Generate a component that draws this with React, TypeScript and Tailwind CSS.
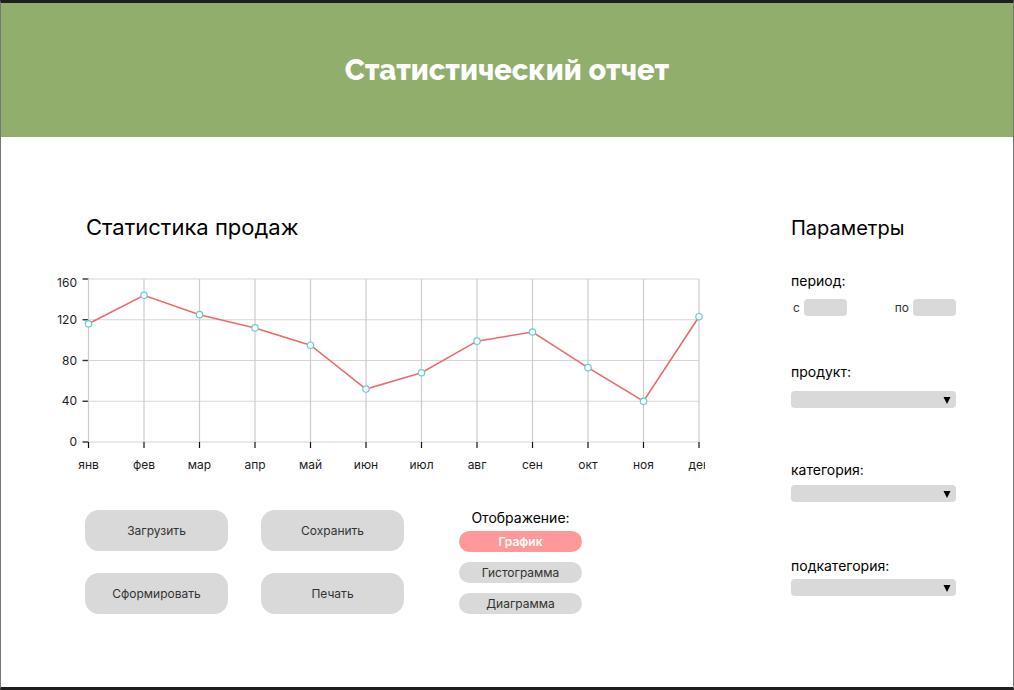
import { useState } from "react";

const sales = [
  { month: "янв", value: 116 },
  { month: "фев", value: 144 },
  { month: "мар", value: 125 },
  { month: "апр", value: 112 },
  { month: "май", value: 95 },
  { month: "июн", value: 52 },
  { month: "июл", value: 68 },
  { month: "авг", value: 99 },
  { month: "сен", value: 108 },
  { month: "окт", value: 73 },
  { month: "ноя", value: 40 },
  { month: "дек", value: 123 },
];
const levels = [0, 40, 80, 120, 160];

const LEFT = 38.5;
const RIGHT = 649;
const TOP = 9;
const BOTTOM = 172;

const px = (i: number) => LEFT + ((RIGHT - LEFT) * i) / (sales.length - 1);
const py = (v: number) => BOTTOM - ((BOTTOM - TOP) * v) / 160;

function SalesChart() {
  return (
    <svg viewBox="0 0 655 205" className="block w-full overflow-hidden" role="img" aria-label="Статистика продаж">
      {levels.map((v) => (
        <g key={v}>
          <line x1={LEFT} x2={RIGHT} y1={py(v)} y2={py(v)} stroke="#d6d6d6" strokeWidth="1.2" />
          <line x1={LEFT - 6} x2={LEFT} y1={py(v)} y2={py(v)} stroke="#333333" strokeWidth="1.4" />
          <text x="27" y={(v === 160 ? 13 : py(v)) + 4} textAnchor="end" fontSize="12" fill="#1c1c1c">
            {v}
          </text>
        </g>
      ))}
      {sales.map((s, i) => (
        <g key={s.month}>
          <line x1={px(i)} x2={px(i)} y1={TOP} y2={BOTTOM} stroke="#cccccc" strokeWidth="1.2" />
          <line x1={px(i)} x2={px(i)} y1={BOTTOM} y2={BOTTOM + 6} stroke="#111111" strokeWidth="1.2" />
          <text x={px(i)} y="199" textAnchor="middle" fontSize="12" fill="#1c1c1c">
            {s.month}
          </text>
        </g>
      ))}
      <polyline
        points={sales.map((s, i) => `${px(i)},${py(s.value)}`).join(" ")}
        fill="none"
        stroke="#ee6a6a"
        strokeWidth="1.6"
      />
      {sales.map((s, i) => (
        <circle key={s.month} cx={px(i)} cy={py(s.value)} r="3.2" fill="#ffffff" stroke="#66cccc" strokeWidth="1.2" />
      ))}
    </svg>
  );
}

const actions = ["Загрузить", "Сохранить", "Сформировать", "Печать"];
const views = ["График", "Гистограмма", "Диаграмма"];

const filters = [
  { id: "product", label: "продукт:", group: "mt-[46px] gap-[9px]" },
  { id: "category", label: "категория:", group: "mt-[52px] gap-[5px]" },
  { id: "subcategory", label: "подкатегория:", group: "mt-[54px] gap-[3px]" },
];

export default function App() {
  const [view, setView] = useState("График");

  return (
    <div className="flex min-h-screen flex-col border-x border-y-3 border-x-[#777777] border-y-[#1e1e1e] bg-white font-['Inter',sans-serif] text-black">
      <header className="flex h-[134px] items-center justify-center bg-[#92ae6d]">
        <h1 className="font-['Raleway','Lato',sans-serif] text-[29px] leading-[34px] font-extrabold text-white">
          Статистический отчет
        </h1>
      </header>

      <main className="flex flex-1 gap-[86px] pt-[77px] pr-[57px] pl-[49px]">
        <section className="min-w-0 flex-1">
          <h2 className="pl-9 text-[22px] leading-[26px]">Статистика продаж</h2>
          <div className="mt-[30px]">
            <SalesChart />
          </div>

          <div className="mt-[35px] flex gap-[55px] pl-[35px]">
            <div className="grid grid-cols-[143px_143px] content-start gap-x-[33px] gap-y-[22px]">
              {actions.map((a) => (
                <button key={a} type="button" className="h-[41px] rounded-[14px] bg-[#d9d9d9] text-xs text-[#333333]">
                  {a}
                </button>
              ))}
            </div>
            <div className="flex w-[123px] flex-col gap-[10px]">
              <div className="flex flex-col gap-[5px]">
                <p className="text-center text-sm leading-4">Отображение:</p>
                <ViewButton name={views[0]} current={view} onPick={setView} />
              </div>
              {views.slice(1).map((v) => (
                <ViewButton key={v} name={v} current={view} onPick={setView} />
              ))}
            </div>
          </div>
        </section>

        <aside className="w-[165px] shrink-0">
          <h2 className="text-[20px] leading-7">Параметры</h2>

          <fieldset className="mt-[29px]">
            <legend className="text-sm leading-5">период:</legend>
            <div className="mt-2 flex items-center justify-between text-xs leading-[17px] text-[#333333]">
              <label className="flex items-center gap-1 pl-0.5">
                с
                <input type="text" className="h-[17px] w-[43px] rounded-[4px] bg-[#d9d9d9] px-1" />
              </label>
              <label className="flex items-center gap-1">
                по
                <input type="text" className="h-[17px] w-[43px] rounded-[4px] bg-[#d9d9d9] px-1" />
              </label>
            </div>
          </fieldset>

          {filters.map((f) => (
            <div key={f.id} className={`flex flex-col ${f.group}`}>
              <label htmlFor={f.id} className="text-sm leading-5">
                {f.label}
              </label>
              <div className="relative flex">
                <select id={f.id} className="h-[17px] w-full appearance-none rounded-[4px] bg-[#d9d9d9] px-2 text-xs">
                  <option value="" />
                </select>
                <svg viewBox="0 0 8 7" className="pointer-events-none absolute top-[6px] right-[5px] h-[7px] w-2" aria-hidden="true">
                  <path d="M0.5 0h7L4 7z" fill="#000000" />
                </svg>
              </div>
            </div>
          ))}
        </aside>
      </main>
    </div>
  );
}

function ViewButton({ name, current, onPick }: { name: string; current: string; onPick: (v: string) => void }) {
  const active = name === current;
  return (
    <button
      type="button"
      aria-pressed={active}
      onClick={() => onPick(name)}
      className={`h-[21px] w-full rounded-full text-xs leading-5 ${
        active ? "bg-[#ff9999] font-semibold text-white" : "bg-[#d9d9d9] text-[#333333]"
      }`}
    >
      {name}
    </button>
  );
}
